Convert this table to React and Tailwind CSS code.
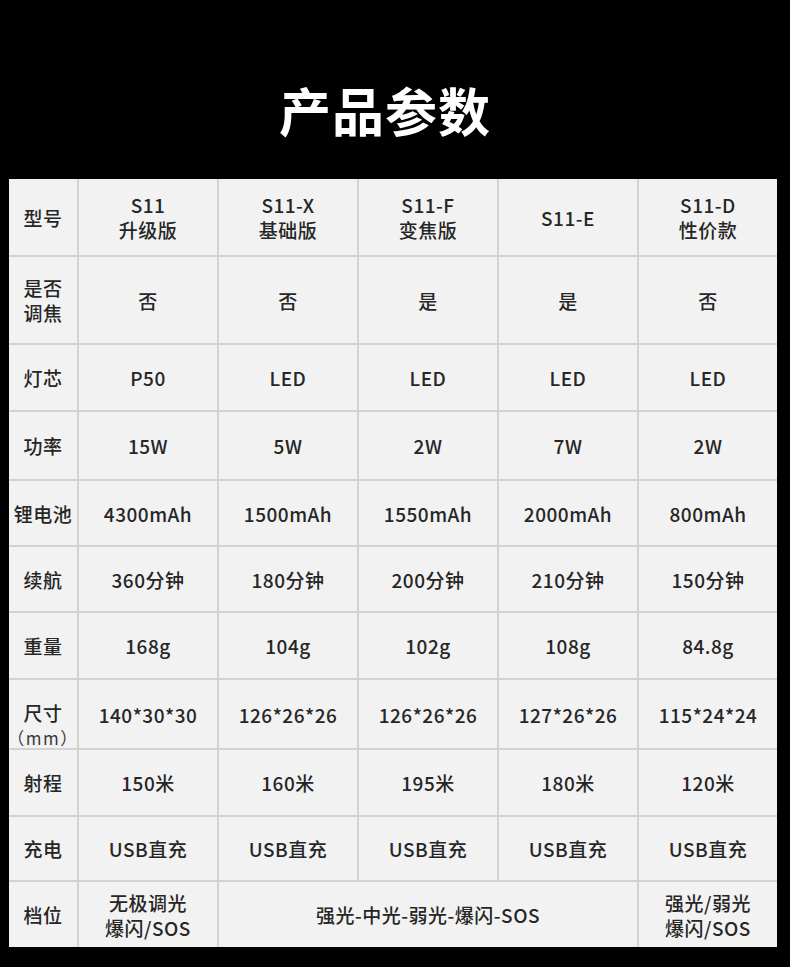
import React from "react";

const rows = [
  { label: "型号", vals: ["S11\n升级版", "S11-X\n基础版", "S11-F\n变焦版", "S11-E", "S11-D\n性价款"], h: "h-[76px]" },
  { label: "是否\n调焦", vals: ["否", "否", "是", "是", "否"], h: "h-[86px]" },
  { label: "灯芯", vals: ["P50", "LED", "LED", "LED", "LED"], h: "h-[65px]" },
  { label: "功率", vals: ["15W", "5W", "2W", "7W", "2W"], h: "h-[67px]" },
  { label: "锂电池", vals: ["4300mAh", "1500mAh", "1550mAh", "2000mAh", "800mAh"], h: "h-[64px]" },
  { label: "续航", vals: ["360分钟", "180分钟", "200分钟", "210分钟", "150分钟"], h: "h-[64px]" },
  { label: "重量", vals: ["168g", "104g", "102g", "108g", "84.8g"], h: "h-[65px]" },
  { label: "尺寸", vals: ["140*30*30", "126*26*26", "126*26*26", "127*26*26", "115*24*24"], h: "h-[68px]", mm: true },
  { label: "射程", vals: ["150米", "160米", "195米", "180米", "120米"], h: "h-[65px]" },
  { label: "充电", vals: ["USB直充", "USB直充", "USB直充", "USB直充", "USB直充"], h: "h-[63px]" },
];

function Cell({ children, className = "" }) {
  return (
    <div
      className={
        "flex flex-col items-center bg-[#f2f2f2] text-center text-[19px] leading-[25px] font-medium tracking-[0.5px] text-[#262626] whitespace-pre-line " +
        className
      }
    >
      {children}
    </div>
  );
}

export default function App() {
  return (
    <div
      className="w-[790px] h-[967px] bg-black overflow-hidden"
      style={{ fontFamily: '"Noto Sans CJK SC", "Noto Sans", sans-serif' }}
    >
      <div className="h-[179px] flex justify-center pr-[20px] pt-[84px]">
        <h1 className="text-[52px] leading-none font-bold text-white tracking-[1px]">产品参数</h1>
      </div>
      <div className="ml-[9px] w-[768px] grid grid-cols-[68px_138px_138px_138px_138px_138px] gap-[2px] bg-[#d2d2d2]">
        {rows.map((r, i) => (
          <React.Fragment key={i}>
            {r.mm ? (
              <Cell className={r.h + " justify-start pt-[21px]"}>
                <span className="leading-[24px]">{r.label}</span>
                <span className="mt-[2px] text-[17px] leading-[21px] font-normal text-[#3a3a3a] tracking-[1.5px] whitespace-nowrap">（mm）</span>
              </Cell>
            ) : (
              <Cell className={r.h + " justify-center"}>{r.label}</Cell>
            )}
            {r.vals.map((v, j) => (
              <Cell key={j} className={r.h + " justify-center"}>
                {v}
              </Cell>
            ))}
          </React.Fragment>
        ))}
        <Cell className="h-[65px] justify-center">档位</Cell>
        <Cell className="h-[65px] justify-center">{"无极调光\n爆闪/SOS"}</Cell>
        <Cell className="h-[65px] justify-center col-span-3">强光-中光-弱光-爆闪-SOS</Cell>
        <Cell className="h-[65px] justify-center">{"强光/弱光\n爆闪/SOS"}</Cell>
      </div>
    </div>
  );
}
